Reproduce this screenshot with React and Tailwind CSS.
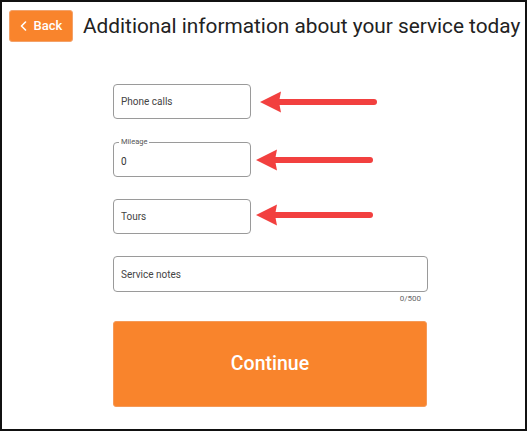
import React from "react";

function Arrow() {
  return (
    <svg width="118" height="24" viewBox="0 0 118 24" className="block">
      <polygon points="0,12 21,1.5 19,12 21,22.5" fill="#f2403f" />
      <line x1="18" y1="12" x2="114" y2="12" stroke="#f2403f" strokeWidth="6" strokeLinecap="round" />
    </svg>
  );
}

export default function App() {
  return (
    <div
      className="w-[527px] h-[431px] border-2 border-[#111] bg-white box-border overflow-hidden"
      style={{ fontFamily: "Roboto, 'Liberation Sans', sans-serif" }}
    >
      <div className="flex items-center pl-[7px] pt-[8px]">
        <button className="shrink-0 w-[64px] h-[32px] rounded-[3px] bg-[#f9842c] text-white flex items-center justify-center gap-[7px] text-[13px] font-medium border border-[#f3a26a]">
          <svg width="7" height="10" viewBox="0 0 7 10">
            <polyline points="5.5,1 1.5,5 5.5,9" fill="none" stroke="white" strokeWidth="1.6" strokeLinecap="round" strokeLinejoin="round" />
          </svg>
          <span>Back</span>
        </button>
        <h1 className="ml-[10px] whitespace-nowrap text-[20.8px] text-[#222] font-normal leading-none">
          Additional information about your service today
        </h1>
      </div>

      <div className="ml-[111px] mt-[42px] flex flex-col w-[315px]">
        <div className="flex items-center">
          <div className="w-[138px] h-[35px] border border-[#9a9a9a] rounded-[4px] flex items-center pl-[7px] text-[10px] text-[#444]">
            Phone calls
          </div>
          <div className="ml-[9px]">
            <Arrow />
          </div>
        </div>

        <div className="flex items-center mt-[23px]">
          <div className="relative w-[138px] h-[35px] border border-[#9a9a9a] rounded-[4px] flex items-center pl-[7px] pt-[3px] text-[10px] text-[#444]">
            <span className="absolute left-[5px] top-[-6px] bg-white px-[2px] text-[7.5px] leading-[10px] text-[#555]">
              Mileage
            </span>
            <span className="text-[#333]">0</span>
          </div>
          <div className="ml-[5px]">
            <Arrow />
          </div>
        </div>

        <div className="flex items-center mt-[22px]">
          <div className="w-[138px] h-[35px] border border-[#9a9a9a] rounded-[4px] flex items-center pl-[7px] text-[10px] text-[#444]">
            Tours
          </div>
          <div className="ml-[5px] mt-[-3px]">
            <Arrow />
          </div>
        </div>

        <div className="mt-[22px] w-[315px] h-[36px] border border-[#9a9a9a] rounded-[4px] flex items-center pl-[7px] text-[10px] text-[#444]">
          Service notes
        </div>
        <div className="text-right pr-[7px] mt-[2px] text-[8px] leading-[10px] text-[#666]">0/500</div>

        <button className="mt-[17px] w-[314px] h-[86px] rounded-[3px] bg-[#f9842c] border border-[#f59a58] text-white text-[19.5px] font-medium">
          Continue
        </button>
      </div>
    </div>
  );
}
